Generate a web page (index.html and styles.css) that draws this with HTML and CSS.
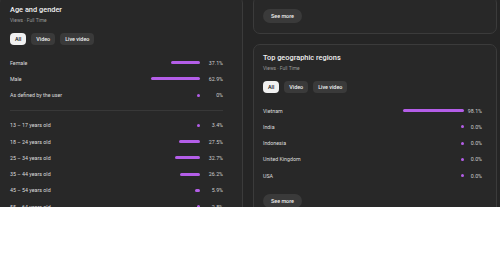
FILE: index.html
```html
<!DOCTYPE html>
<html lang="en">
<head>
    <meta charset="UTF-8">
    <meta name="viewport" content="width=device-width, initial-scale=1.0">
    <title>Audience</title>
    <link rel="stylesheet" href="styles.css">
</head>
<body>
    <div class="screen">
        <div class="columns">
            <section class="card card-age">
                <h2>Age and gender</h2>
                <p class="sub">Views · Full Time</p>
                <div class="chips">
                    <button class="chip active">All</button>
                    <button class="chip">Video</button>
                    <button class="chip">Live video</button>
                </div>
                <ul class="rows" id="gender_list"></ul>
                <hr class="divider">
                <ul class="rows" id="age_list"></ul>
            </section>

            <div class="side">
                <section class="card card-top">
                    <button class="more">See more</button>
                </section>
                <section class="card card-geo">
                    <h2>Top geographic regions</h2>
                    <p class="sub">Views · Full Time</p>
                    <div class="chips">
                        <button class="chip active">All</button>
                        <button class="chip">Video</button>
                        <button class="chip">Live video</button>
                    </div>
                    <ul class="rows" id="geo_list"></ul>
                    <button class="more">See more</button>
                </section>
            </div>
        </div>
    </div>

    <script>
        const gender=[
            {name:"Female",value:37.1,label:"37.1%"},
            {name:"Male",value:62.9,label:"62.9%"},
            {name:"As defined by the user",value:0,label:"0%"}
        ];
        const ages=[
            {name:"13 – 17 years old",value:3.4,label:"3.4%"},
            {name:"18 – 24 years old",value:27.5,label:"27.5%"},
            {name:"25 – 34 years old",value:32.7,label:"32.7%"},
            {name:"35 – 44 years old",value:26.2,label:"26.2%"},
            {name:"45 – 54 years old",value:5.9,label:"5.9%"},
            {name:"55 – 64 years old",value:2.8,label:"2.8%"}
        ];
        const regions=[
            {name:"Vietnam",value:98.1,label:"98.1%"},
            {name:"India",value:0,label:"0.0%"},
            {name:"Indonesia",value:0,label:"0.0%"},
            {name:"United Kingdom",value:0,label:"0.0%"},
            {name:"USA",value:0,label:"0.0%"}
        ];

        function fillRows(id,items){
            const list=document.getElementById(id);
            list.innerHTML="";
            items.forEach(item=>{
                const li=document.createElement('li');
                li.className="row";
                li.innerHTML=`
                <span class="label">${item.name}</span>
                <span class="track"><span class="bar" style="width:${item.value}%"></span></span>
                <span class="pct">${item.label}</span>
                `;
                list.appendChild(li);
            });
        }
        fillRows('gender_list',gender);
        fillRows('age_list',ages);
        fillRows('geo_list',regions);
    </script>
</body>
</html>
```

FILE: styles.css
```css
body {
  margin: 0;
  padding: 0;
  background: #ffffff;
  font-family: Roboto, 'Liberation Sans', sans-serif;
}
.screen {
  width: 500px;
  height: 207px;
  overflow: hidden;
  background: #252525;
  color: #f1f1f1;
}
.columns {
  display: grid;
  grid-template-columns: 244px 244px;
  gap: 10px;
  align-items: start;
  margin: -4px 0 0 -1px;
}
.side {
  display: flex;
  flex-direction: column;
  gap: 10px;
}
.card {
  background: #282828;
  border: 1px solid #3b3b3b;
  border-radius: 7px;
}
.card-age {
  padding: 8px 19px 20px 10px;
}
.card-top {
  padding: 12px 14px 10px 9px;
}
.card-geo {
  padding: 8px 14px 10px 9px;
}
.card h2 {
  margin: 0;
  font-size: 7.4px;
  line-height: 10px;
  font-weight: 500;
  color: #f1f1f1;
}
.sub {
  margin: 1.5px 0 0;
  font-size: 4.9px;
  line-height: 7px;
  color: #9a9a9a;
}
.chips {
  display: flex;
  gap: 5px;
  margin-top: 9.5px;
}
.chip {
  height: 12px;
  padding: 0 5px;
  border: none;
  border-radius: 4px;
  background: #3a3a3a;
  color: #f1f1f1;
  font-family: inherit;
  font-size: 5.4px;
  font-weight: 500;
}
.chip.active {
  background: #f1f1f1;
  color: #0f0f0f;
}
.rows {
  list-style-type: none;
  margin: 0;
  padding: 0;
}
.chips + .rows {
  margin-top: 9.5px;
}
.row {
  display: grid;
  grid-template-columns: 1fr 78px 23px;
  align-items: center;
  height: 16.25px;
  font-size: 5.3px;
  color: #dedede;
}
.card-geo .row {
  grid-template-columns: 1fr 62px 18px;
}
.track {
  display: flex;
  justify-content: flex-end;
}
.bar {
  height: 3px;
  min-width: 3px;
  border-radius: 2px;
  background: #b45ee8;
}
.pct {
  text-align: right;
  color: #cfcfcf;
}
.divider {
  border: none;
  border-top: 1px solid #383838;
  margin: 7px 0 6px;
}
.more {
  display: block;
  height: 14px;
  padding: 0 8px;
  border: none;
  border-radius: 7px;
  background: #3a3a3a;
  color: #f1f1f1;
  font-family: inherit;
  font-size: 5.4px;
  font-weight: 500;
}
.card-geo .more {
  margin-top: 10px;
}
```
